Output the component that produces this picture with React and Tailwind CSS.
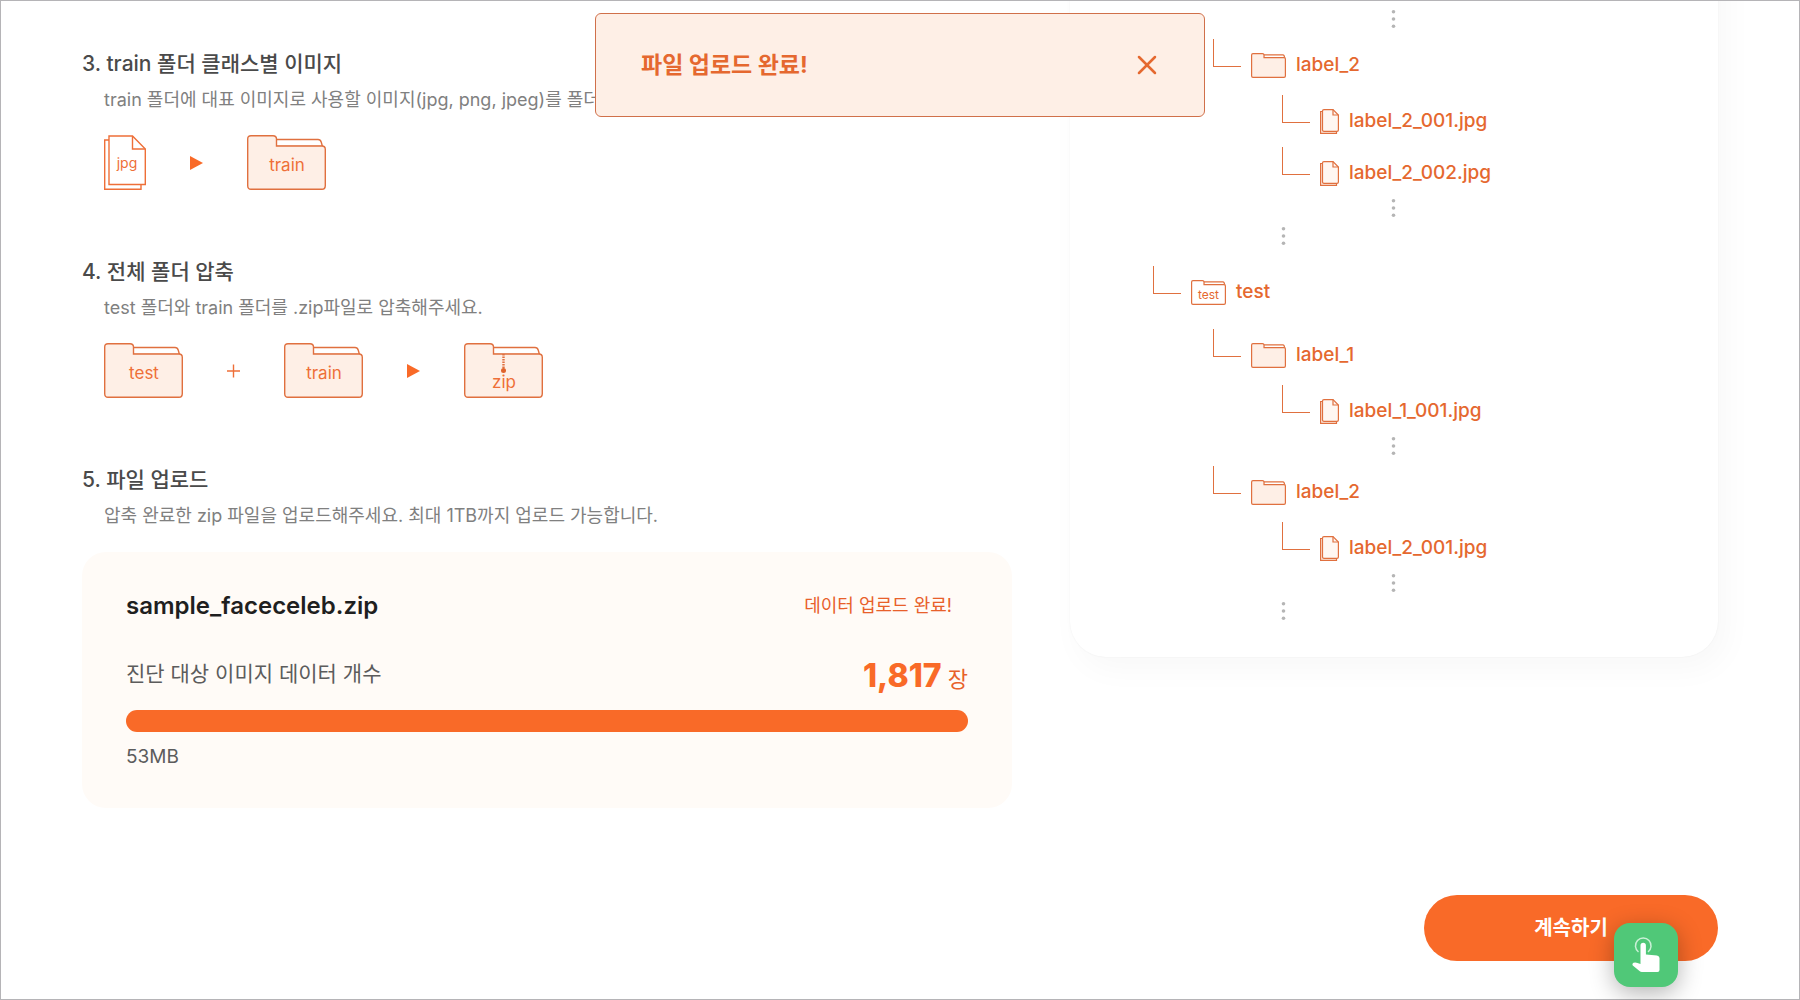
import { useState } from 'react'
import { X } from 'lucide-react'

const tree = [
  { type: 'dots', level: 3 },
  { type: 'folder', level: 2, name: 'label_2' },
  { type: 'file', level: 3, name: 'label_2_001.jpg', first: true },
  { type: 'file', level: 3, name: 'label_2_002.jpg' },
  { type: 'dots', level: 3 },
  { type: 'dots', level: 2 },
  { type: 'root', level: 1, name: 'test' },
  { type: 'folder', level: 2, name: 'label_1' },
  { type: 'file', level: 3, name: 'label_1_001.jpg', first: true },
  { type: 'dots', level: 3 },
  { type: 'folder', level: 2, name: 'label_2' },
  { type: 'file', level: 3, name: 'label_2_001.jpg', first: true },
  { type: 'dots', level: 3 },
  { type: 'dots', level: 2 },
]

const rowIndent = { 1: 'ml-0', 2: 'ml-[60px]', 3: 'ml-[129px]' }
const dotsIndent = { 2: 'ml-[128px] mt-2.5', 3: 'ml-[238px]' }
const rowSpace = { root: 'mt-[21px]', folder: 'mt-[11px]', file: 'mt-0' }

function FolderIcon({ label, zip }) {
  return (
    <svg width="79" height="55" viewBox="0 0 79 55" fill="none" stroke="#e0703f" strokeWidth="1.4">
      <path d="M29 4.5H71Q73.5 4.5 74.2 7L75.5 11.5H29Z" fill="#fff" />
      <path d="M4 .7H26Q29.5 .7 29.5 4V11H75Q78.3 11 78.3 14.5V50.5Q78.3 54.3 75 54.3H4Q.7 54.3 .7 50.5V4Q.7 .7 4 .7Z" fill="#feefe6" />
      {zip && (
        <>
          <path d="M39.5 11V26" strokeWidth="2.4" strokeDasharray="1.5 1" />
          <circle cx="39.5" cy="27.5" r="2.5" fill="#e0632c" stroke="none" />
        </>
      )}
      <text x="40" y={zip ? 45 : 36} textAnchor="middle" fontSize="17" fill="#ee6f38" stroke="none">{label}</text>
    </svg>
  )
}

function JpgIcon() {
  return (
    <svg width="42" height="55" viewBox="0 0 42 55" fill="none" stroke="#ee6f38" strokeWidth="1.4">
      <path d="M5 5H.7V54.3H37V50" />
      <path d="M5 1H28.5L41.3 14V49.5H5Z" fill="#fff" />
      <path d="M28.5 1V14H41.3" />
      <text x="23" y="33" textAnchor="middle" fontSize="14" fill="#ee6f38" stroke="none">jpg</text>
    </svg>
  )
}

function Arrow() {
  return (
    <svg width="13" height="14" viewBox="0 0 13 14">
      <path d="M0 0L13 7L0 14Z" fill="#f96a28" />
    </svg>
  )
}

function Plus() {
  return (
    <svg width="13" height="14" viewBox="0 0 13 14" stroke="#ee6f38" strokeWidth="1.4">
      <path d="M6.5 .5V13.5M0 7H13" />
    </svg>
  )
}

function SmallFolder({ label }) {
  return (
    <svg width="35" height="25" viewBox="0 0 35 25" fill="none" stroke="#e0703f" strokeWidth="1.2">
      <path d="M12.5 1.8H32Q33.2 1.8 33.6 4.6H12.5Z" fill="#fff" />
      <path d="M2 .6H11.5Q13 .6 13 2V4.6H33Q34.4 4.6 34.4 6V23Q34.4 24.4 33 24.4H2Q.6 24.4 .6 23V2Q.6 .6 2 .6Z" fill={label ? '#fff' : '#feefe6'} />
      {label && <text x="17.5" y="18.5" textAnchor="middle" fontSize="12" fill="#e5682f" stroke="none">{label}</text>}
    </svg>
  )
}

function SmallFile() {
  return (
    <svg width="19" height="25" viewBox="0 0 19 25" fill="none" stroke="#e0703f" strokeWidth="1.2">
      <path d="M2.5 2.5H.6V24.4H16.5V22.5" fill="#feefe6" />
      <path d="M4 .6H13L18.4 6V21Q18.4 22.4 17 22.4H4Q2.5 22.4 2.5 21V2Q2.5 .6 4 .6Z" fill="#fff7f2" />
      <path d="M13 .6V6H18.4" />
    </svg>
  )
}

function Dots() {
  return (
    <svg width="5" height="18" viewBox="0 0 5 18" fill="#b5b5b5">
      <circle cx="2.5" cy="1.8" r="1.8" />
      <circle cx="2.5" cy="9" r="1.8" />
      <circle cx="2.5" cy="16.2" r="1.8" />
    </svg>
  )
}

function TreeRow({ item }) {
  if (item.type === 'dots') {
    return <li className={dotsIndent[item.level]}><Dots /></li>
  }
  const space = item.first ? 'mt-1' : rowSpace[item.type]
  return (
    <li className={`flex h-[52px] items-center gap-2.5 ${rowIndent[item.level]} ${space}`}>
      <span className="h-7 w-7 self-start border-b border-l border-[#e0703f]" />
      {item.type === 'file' ? <SmallFile /> : <SmallFolder label={item.type === 'root' ? 'test' : ''} />}
      <span className="text-[19px] font-medium text-[#e5682f]">{item.name}</span>
    </li>
  )
}

function Step({ title, desc, children }) {
  return (
    <section>
      <h2 className="text-[21px] leading-[30px] font-medium text-[#4a4a4a]">{title}</h2>
      <p className="mt-2 ml-[22px] text-lg leading-[26px] whitespace-nowrap text-[#808080]">{desc}</p>
      {children}
    </section>
  )
}

export default function App() {
  const [showToast, setShowToast] = useState(true)

  return (
    <div className="min-h-screen overflow-hidden border border-[#b5b4b7] bg-white px-[81px] pb-9 font-['Inter','Noto_Sans_CJK_KR',sans-serif]">
      <main className="grid grid-cols-[930fr_648fr] items-start gap-[58px]">
        <div className="flex min-w-0 flex-col gap-[67px] pt-12">
          <Step title="3. train 폴더 클래스별 이미지" desc="train 폴더에 대표 이미지로 사용할 이미지(jpg, png, jpeg)를 폴더에 넣어주세요.">
            <div className="mt-[22px] ml-[22px] flex items-center gap-11">
              <JpgIcon />
              <Arrow />
              <FolderIcon label="train" />
            </div>
          </Step>

          <Step title="4. 전체 폴더 압축" desc="test 폴더와 train 폴더를 .zip파일로 압축해주세요.">
            <div className="mt-[22px] ml-[22px] flex items-center gap-11">
              <FolderIcon label="test" />
              <Plus />
              <FolderIcon label="train" />
              <Arrow />
              <FolderIcon label="zip" zip />
            </div>
          </Step>

          <Step title="5. 파일 업로드" desc="압축 완료한 zip 파일을 업로드해주세요. 최대 1TB까지 업로드 가능합니다.">
            <div className="mt-[23px] rounded-3xl bg-[#fffbf7] px-11 pt-9 pb-[38px]">
              <div className="flex h-9 items-center justify-between">
                <h3 className="text-2xl font-semibold text-[#1f1f1f]">sample_faceceleb.zip</h3>
                <p className="px-4 text-lg text-[#e8602a]">데이터 업로드 완료!</p>
              </div>
              <div className="mt-8 flex h-10 items-start justify-between">
                <p className="text-[21px] leading-9 text-[#5c5c5c]">진단 대상 이미지 데이터 개수</p>
                <p className="text-[22px] leading-10 text-[#e8602a]">
                  <strong className="text-[32px] leading-10 font-extrabold text-[#f96a28]">1,817</strong> 장
                </p>
              </div>
              <div className="mt-3.5 h-[22px] rounded-full bg-[#f96a28]" />
              <p className="mt-3 text-[19px] leading-[26px] text-[#5c5c5c]">53MB</p>
            </div>
          </Step>
        </div>

        <ul className="-mt-16 rounded-[36px] bg-white pt-[73px] pb-[37px] pl-[83px] shadow-[8px_12px_32px_rgba(0,0,0,0.03),0_0_2px_rgba(0,0,0,0.06)]">
          {tree.map((item, i) => <TreeRow key={i} item={item} />)}
        </ul>
      </main>

      <div className="mt-[87px] flex justify-end">
        <button className="h-[66px] w-[294px] rounded-full bg-[#f96a28] text-[20px] font-bold text-white">계속하기</button>
      </div>

      {showToast && (
        <div role="status" className="fixed inset-x-0 top-[13px] mx-auto flex h-[104px] w-[610px] items-center justify-between rounded-md border border-[#d0704a] bg-[#feefe6] pr-[41px] pl-[45px] text-[#e5682f]">
          <p className="text-[23px] font-bold">파일 업로드 완료!</p>
          <button aria-label="닫기" onClick={() => setShowToast(false)}>
            <X size={32} strokeWidth={1.9} />
          </button>
        </div>
      )}

      <button aria-label="클릭" className="fixed right-[122px] bottom-[13px] flex size-16 items-center justify-center rounded-2xl bg-[#50c878] shadow-[0_6px_24px_rgba(0,0,0,0.3)]">
        <svg width="28" height="36" viewBox="0 0 28 36" fill="#fff">
          <path d="M6.5 15A7.8 7.8 0 1 1 16 15" fill="none" stroke="#c9f0d6" strokeWidth="1.5" />
          <path d="M8.5 8.5a2.7 2.7 0 0 1 5.4 0V17.5L25 18.5Q27.5 19 27.5 21V33Q27.5 35 25.5 35H10Q8.5 35 7.5 34L.8 28.5Q-.2 27 1.5 25.8Q3.500 25 5.500 26L8.5 27Z" />
        </svg>
      </button>
    </div>
  )
}
